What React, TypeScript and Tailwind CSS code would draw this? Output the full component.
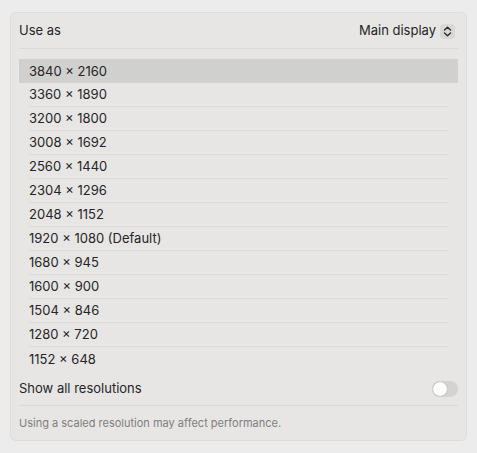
import { useState } from "react";

const resolutions = [
  "3840 × 2160",
  "3360 × 1890",
  "3200 × 1800",
  "3008 × 1692",
  "2560 × 1440",
  "2304 × 1296",
  "2048 × 1152",
  "1920 × 1080 (Default)",
  "1680 × 945",
  "1600 × 900",
  "1504 × 846",
  "1280 × 720",
  "1152 × 648",
];

function UpDownIcon() {
  return (
    <svg width="15" height="15" viewBox="0 0 15 15" fill="none">
      <path
        d="M4.5 6 L7.5 3.2 L10.5 6"
        stroke="#2a2a2a"
        strokeWidth="1.4"
        strokeLinecap="round"
        strokeLinejoin="round"
      />
      <path
        d="M4.5 9 L7.5 11.8 L10.5 9"
        stroke="#2a2a2a"
        strokeWidth="1.4"
        strokeLinecap="round"
        strokeLinejoin="round"
      />
    </svg>
  );
}

export default function App() {
  const [selected, setSelected] = useState(0);
  const [showAll, setShowAll] = useState(false);

  return (
    <div
      className="h-[453px] w-[477px] bg-[#ececec] pt-3 pl-[10px] text-[#252525]"
      style={{ fontFamily: "Inter, 'Liberation Sans', sans-serif" }}
    >
      <div className="w-[457px] rounded-[6px] border border-[#dcdcdc] bg-[#e7e6e5] px-2">
        {/* Use as */}
        <div className="flex h-[36px] items-center justify-between border-b border-[#d9d9d8] pt-px">
          <span className="text-[13px]">Use as</span>
          <div className="mr-[3px] flex items-center gap-[4px]">
            <span className="text-[13px]">Main display</span>
            <span className="flex h-[15px] w-[15px] items-center justify-center rounded-[4px] bg-[#d9d8d7]">
              <UpDownIcon />
            </span>
          </div>
        </div>

        {/* Resolution list */}
        <div className="mt-[10px] flex flex-col">
          {resolutions.map((r, i) => {
            const isSel = i === selected;
            const showLine =
              i < resolutions.length - 1 && !isSel && i + 1 !== selected;
            return (
              <div
                key={r}
                onClick={() => setSelected(i)}
                className={
                  isSel
                    ? "h-6 bg-[#d0d0cf] px-[10px]"
                    : "h-6 px-[10px]"
                }
              >
                <div
                  className={
                    showLine
                      ? "flex h-6 items-center border-b border-[#dcdcdb] pt-px text-[13px]"
                      : "flex h-6 items-center pt-px text-[13px]"
                  }
                >
                  {r}
                </div>
              </div>
            );
          })}
        </div>

        {/* Show all */}
        <div className="flex h-[35px] items-center justify-between border-b border-[#d9d9d8] pt-px">
          <span className="text-[13px]">Show all resolutions</span>
          <button
            onClick={() => setShowAll((v) => !v)}
            className={
              showAll
                ? "flex h-[16px] w-[26px] items-center justify-end rounded-full bg-[#3b82f6] p-px"
                : "flex h-[16px] w-[26px] items-center rounded-full bg-[#d3d3d2] p-px"
            }
          >
            <span className="h-[14px] w-[14px] rounded-full bg-white shadow-[0_0_1px_rgba(0,0,0,0.35)]" />
          </button>
        </div>

        {/* Footer */}
        <div className="flex h-[34px] items-center text-[11px] text-[#7e7e7e]">
          Using a scaled resolution may affect performance.
        </div>
      </div>
    </div>
  );
}
